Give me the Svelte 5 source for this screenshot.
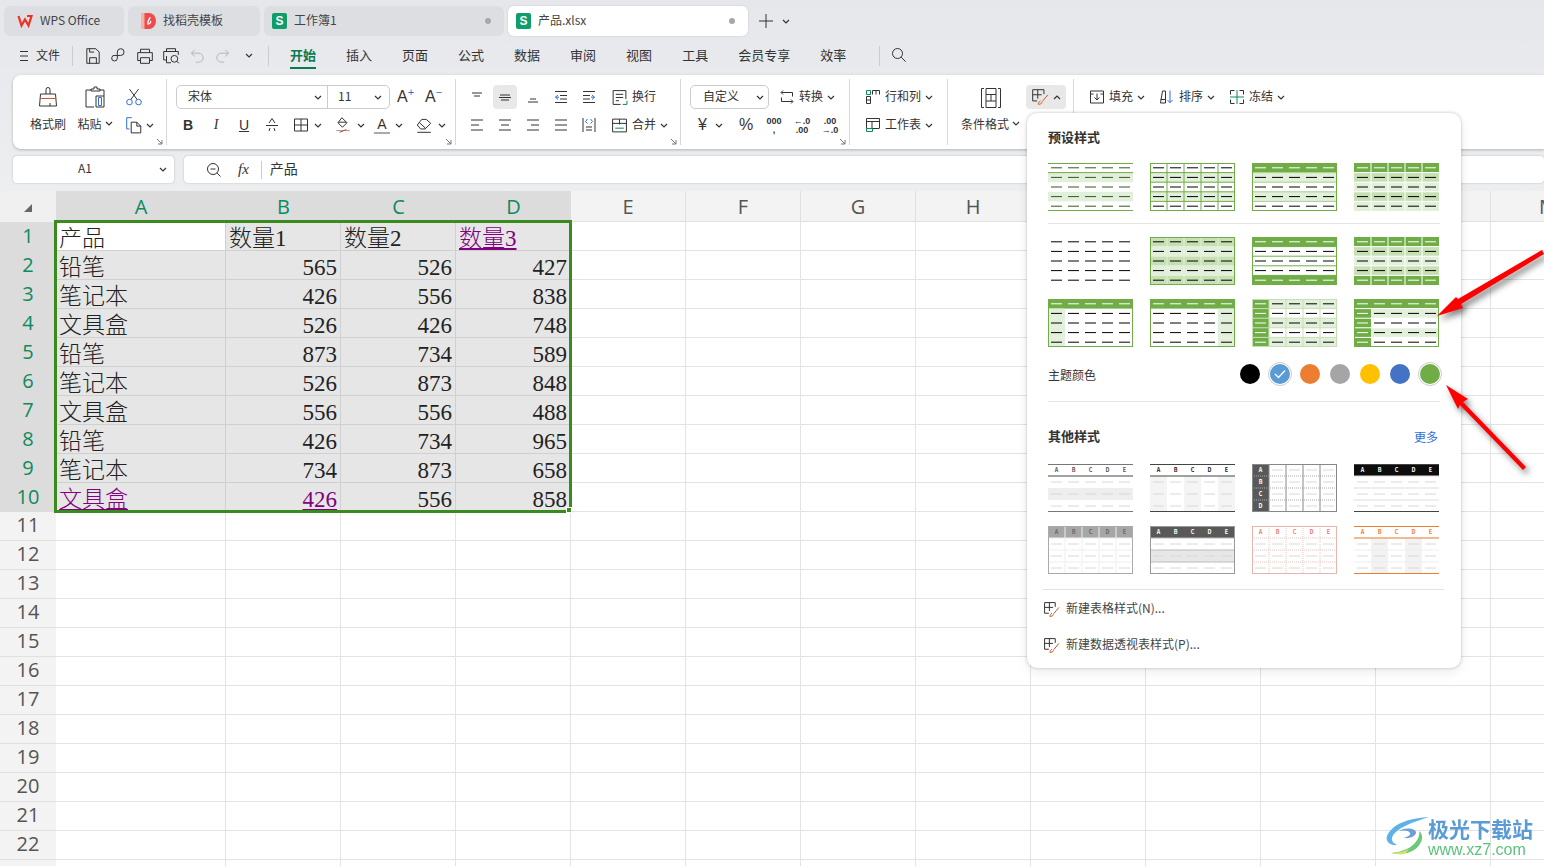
<script>
	const G = '#70ad47', L = '#e2efda', M = '#c6e0b4', W = '#fff';

	const presets = [
		{ tb: G, hdr: G, dash: '#375623', fill: (r) => (r % 2 ? L : null) },
		{ border: G, hl: G, vl: G, fill: (r) => (r % 2 ? L : null) },
		{ border: G, hl: '#a9d18e', fill: (r) => (r === 0 ? G : r % 2 ? L : null) },
		{ hl: W, vl: W, fill: (r) => (r === 0 ? G : r % 2 ? M : L) },
		{ fill: () => null },
		{ border: G, hl: L, vl: L, fill: (r) => (r % 2 ? L : M) },
		{ border: G, hl: G, fill: (r) => (r === 0 || r === 4 ? G : null) },
		{ hl: W, vl: W, fill: (r) => (r === 0 || r === 4 ? G : r % 2 ? M : L) },
		{ border: G, fill: (r, c) => (r === 0 ? G : c === 0 ? L : null) },
		{ border: G, fill: (r, c) => (r === 0 ? G : c === 4 ? L : null) },
		{ border: M, hl: M, vl: M, fill: (r, c) => (c === 0 ? G : r % 2 === 0 ? L : null) },
		{ border: G, hl: W, fill: (r, c) => (r === 0 || c === 0 ? G : r % 2 ? L : null) }
	];

	const others = [
		{ labels: 'top', lc: '#555', tb: '#777', hdr: '#444', fill: (r) => (r === 2 ? '#eee' : null) },
		{ labels: 'top', lc: '#222', tb: '#444', hdr: '#444', fill: (r, c) => (c % 2 === 0 && r > 0 ? '#f4f4f4' : null) },
		{ labels: 'left', lc: W, border: '#888', hl: '#aaa', vl: '#888', dotted: true, fill: (r, c) => (c === 0 ? '#595959' : null) },
		{ labels: 'top', lc: W, hl: '#ddd', tb: '#444', fill: (r) => (r === 0 ? '#0d0d0d' : null) },
		{ labels: 'top', lc: '#666', border: '#aaa', hl: '#eee', vl: '#eee', fill: (r) => (r === 0 ? '#a6a6a6' : null) },
		{ labels: 'top', lc: W, border: '#999', hl: '#bbb', fill: (r) => (r === 0 ? '#595959' : r === 2 ? '#e7e7e7' : null) },
		{ labels: 'top', lc: '#e77', border: '#e8b4ae', hl: '#efc4bf', vl: '#efc4bf', dotted: true, fill: () => null },
		{ labels: 'top', lc: '#ed7d31', tb: '#ed7d31', hdr: '#ed7d31', hl: '#eee', fill: (r, c) => (c % 2 === 1 && r > 0 ? '#f2f2f2' : null) }
	];

	// one thumbnail as cell list, 85x48 box
	function cells(t, rows) {
		const list = [];
		const cw = 85 / 5, ch = 48 / rows;
		for (let r = 0; r < rows; r++) {
			for (let c = 0; c < 5; c++) {
				const fill = t.fill(r, c);
				let label = null;
				if (t.labels === 'top' && r === 0) label = 'ABCDE'[c];
				if (t.labels === 'left' && c === 0) label = 'ABCD'[r];
				let stroke = t.dash || '#000';
				if (fill === G) stroke = W;
				if (rows === 4) stroke = '#d8d8d8';
				list.push({ x: c * cw, y: r * ch, w: cw, h: ch, fill, label, stroke });
			}
		}
		return list;
	}

	const swatches = [
		{ color: '#000' },
		{ color: '#5b9bd5', checked: true },
		{ color: '#ed7d31' },
		{ color: '#a5a5a5' },
		{ color: '#ffc000' },
		{ color: '#4472c4' },
		{ color: '#70ad47', ring: true }
	];

	const K = '#333', B = '#2f6fe0', N = '#0e8a5f', R = '#d2571f';
	const icons = {
		save: [['M2.5 1.5h8l3 3v10h-11z M5 14.5V9.5h6v5 M5 1.5v3h4', K]],
		share: [['M6.5 7V4.5a3 3 0 1 1 3 3H4.5a2.5 2.5 0 1 0 2 2.5V7.5', K]],
		print: [['M4 5V2h8v3 M4 12H1.5V5h13v7H12 M4 9.5h8v5H4z', K]],
		preview: [['M4 4V1.5h8V4 M3.5 11.5h-2V4h13v3 M4 8v6h4', K], ['M11 7.5a3 3 0 1 0 0 6 3 3 0 0 0 0-6z M13 12.5l2 2', K]],
		undo: [['M6 2.5 3 5.5l3 3 M3 5.5h6.5a4 4 0 0 1 0 8H7', '#b5b5b5']],
		redo: [['M10 2.5l3 3-3 3 M13 5.5H6.5a4 4 0 0 0 0 8H9', '#b5b5b5']],
		search: [['M6.5 1.5a5 5 0 1 0 0 10 5 5 0 0 0 0-10z M10.2 10.2l4.5 4.5', K]],
		plus: [['M8 1v14M1 8h14', K]],
		zoom: [['M7 1.5a5.5 5.5 0 1 0 0 11 5.5 5.5 0 0 0 0-11z M4.5 7h5 M11 11l3.5 3.5', K]],
		cut: [['M4 1l7 9.5M12 1l-7 9.5', K], ['M4 10a2.5 2.5 0 1 0 0 5 2.5 2.5 0 0 0 0-5z M12 10a2.5 2.5 0 1 0 0 5 2.5 2.5 0 0 0 0-5z', B]],
		copy: [['M6 1.5H1.5v10H4', B], ['M5.5 5.5h5l3.5 3.5v6H5.5z M10.5 5.5V9H14', K]],
		strike: [['M5 6 8 1.5 11 6 M5 14l1-3 M11 14l-1-3 M2 8.5h12', K]],
		border: [['M1.5 2h13v12h-13z M8 2v12 M1.5 8h13', K]],
		fillc: [['M7 1.5l4.5 4.5-4 4-4-4z M4 5.5h7', K], ['M2 13h12', '#999'], ['M5 14.5l6-2.5', '#e03b3b']],
		eraser: [['M6 3 2 8l3 3.5h4l5-5L10 3z M4 6l5.5 5', K], ['M2 14.5h12', K]],
		at: [['M3 4h10 M5 7h6', K]],
		am: [['M3 6h10 M2 8.500h12 M4 11h8', K]],
		ab: [['M5 10h6 M3 13h10', K]],
		indl: [['M2 2.500h12 M7 6.500h7 M7 10h7 M2 13.500h12', K], ['M5 6 2.500 8.200 5 10.500 M2.500 8.200h3.500', B]],
		indr: [['M2 2.500h12 M2 6.500h7 M2 10h7 M2 13.500h12', K], ['M11 6l2.500 2.200L11 10.500 M13.500 8.200H10', B]],
		wrap: [['M2 1.500h12v8 M2 1.500v13h7 M4.500 5h7 M4.500 8h7 M4.500 11h3', K], ['M15 11v3.500h-4', N]],
		ll: [['M2 3h12 M2 8h8 M2 13h12', K]],
		lc: [['M2 3h12 M4 8h8 M2 13h12', K]],
		lr: [['M2 3h12 M6 8h8 M2 13h12', K]],
		lj: [['M2 3h12 M2 8h12 M2 13h12', K]],
		dist: [['M2 1v14 M14 1v14 M5 10h6 M5 13h6', K], ['M6.500 2 4.500 4.500l2 2 M9.500 2l2 2.500-2 2', B]],
		merge: [['M1.500 2h13v12h-13z M8 2v5 M1.500 6h13', K], ['M4 10.500h8', N]],
		conv: [['M4 1.500 2 3.500l2 2 M2.500 3.500h11v4 M12 14.500l2-2-2-2 M13.500 12.500h-11v-4', K]],
		rows: [['M1.500 1.500h4v4h-4z', N], ['M7.500 1.500h7 M7.500 5.500v-4 M11 1.500v4 M14.500 1.500v4 M1.500 7.500h4v7h-4z M1.500 11h4', K]],
		sheet: [['M1.500 1.500h13v10 M1.500 1.500v10 M1.500 4.500h13 M7 4.500v7h7', K], ['M1.500 11.500h6v3h-6z', N]],
		tstyle: [['M1.500 1.500h10v4 M1.500 1.500v10h4 M1.500 6h8 M6 1.500v8', K], ['M15 6l-5 6 M8.500 11.500c-1.500.5-2 2-2 3 1.500 0 3-.5 3.500-2', R]],
		fillico: [['M1.500 2h13v12h-13z M1.500 5h3 M11.500 5h3', K], ['M8 4.500v6 M5.500 8.500 8 11l2.500-2.500', K]],
		sort: [['M1.500 14 3.500 2h3v12z M1.500 10.500h5', K], ['M11 1.500v12 M8.500 11l2.500 2.700 2.500-2.700', B]],
		freeze: [['M5.500 1.500h-4v4 M10.500 1.500h4v4 M5.500 14.500h-4v-4 M10.500 14.500h4v-4', K], ['M1 8h14 M8 1v14', N]]
	};

	const rowData = [
		['产品', '数量1', '数量2', '数量3'],
		['铅笔', 565, 526, 427],
		['笔记本', 426, 556, 838],
		['文具盒', 526, 426, 748],
		['铅笔', 873, 734, 589],
		['笔记本', 526, 873, 848],
		['文具盒', 556, 556, 488],
		['铅笔', 426, 734, 965],
		['笔记本', 734, 873, 658],
		['文具盒', 426, 556, 858]
	];
	const letters = 'ABCDEFGHIJKLM'.split('');
	const linked = ['0-3', '9-0', '9-1'];
	const allRows = Array.from({ length: 23 }, (_, i) => i);
	const menus = ['插入', '页面', '公式', '数据', '审阅', '视图', '工具', '会员专享', '效率'];
</script>

{#snippet icon(name, size = 16)}
	<svg class="icon" width={size} height={size} viewBox="0 0 16 16" fill="none">
		{#each icons[name] as p}
			<path d={p[0]} stroke={p[1]} stroke-width={16 / size} />
		{/each}
	</svg>
{/snippet}

{#snippet caret()}
	<svg class="caret" width="8" height="5" viewBox="0 0 8 5" fill="none"><path d="M1 1l3 3 3-3" stroke="#333" stroke-width="1.2" /></svg>
{/snippet}

{#snippet launcher()}
	<svg class="launcher" width="7" height="7" viewBox="0 0 7 7" fill="none"><path d="M1 1l5 5M6 2v4H2" stroke="#777" /></svg>
{/snippet}

{#snippet thumb(t, rows)}
	<svg class="thumb" width="85" height="48" viewBox="0 0 85 48" fill="none">
		{#each cells(t, rows) as c}
			{#if c.fill}
				<rect x={c.x} y={c.y} width={c.w} height={c.h} fill={c.fill} />
			{/if}
		{/each}
		{#each [1, 2, 3, 4].slice(0, rows - 1) as i}
			{#if t.hl}
				<line x1="0" x2="85" y1={(i * 48) / rows} y2={(i * 48) / rows} stroke={t.hl} stroke-dasharray={t.dotted ? '1 1' : null} />
			{/if}
		{/each}
		{#if t.hdr}
			<line x1="0" x2="85" y1={48 / rows} y2={48 / rows} stroke={t.hdr} />
		{/if}
		{#each [1, 2, 3, 4] as i}
			{#if t.vl}
				<line y1="0" y2="48" x1={i * 17} x2={i * 17} stroke={t.vl} stroke-dasharray={t.dotted && t.labels !== 'left' ? '1 1' : null} />
			{/if}
		{/each}
		{#each cells(t, rows) as c}
			{#if c.label}
				<text x={c.x + c.w / 2} y={c.y + c.h / 2 + 2} font-size="5.500" font-weight="700" text-anchor="middle" fill={t.lc}>{c.label}</text>
			{:else}
				<line x1={c.x + 3} x2={c.x + 14} y1={c.y + c.h / 2} y2={c.y + c.h / 2} stroke={c.stroke} />
			{/if}
		{/each}
		{#if t.tb}
			<path d="M0 .5h85M0 47.500h85" stroke={t.tb} />
		{/if}
		{#if t.border}
			<rect x=".5" y=".5" width="84" height="47" stroke={t.border} />
		{/if}
	</svg>
{/snippet}

<div class="page">
	<div class="tabs">
		<div class="tab tab-wps">
			<svg width="16" height="14" viewBox="0 0 16 14" fill="none"><path d="M1.500 2l3 9.500L8 5.500l3.500 6 3-9.500H10" stroke="#ee3124" stroke-width="2.200" /></svg>
			<span class="tab-text">WPS Office</span>
		</div>
		<div class="tab tab-tpl">
			<svg width="15" height="16" viewBox="0 0 15 16"><path d="M3 0h5a7 8 0 0 1 0 16H3z" fill="#ef4b4b" /><rect width="3.500" height="16" fill="#f9b0a8" /><path d="M9 4c0 3-3 3-2 7 2 0 3-2 2.500-3" stroke="#fff" fill="none" stroke-width="1.300" /></svg>
			<span class="tab-text">找稻壳模板</span>
		</div>
		<div class="tab tab-book">
			<span class="s-logo">S</span>
			<span class="tab-text">工作簿1</span>
			<i class="dot"></i>
		</div>
		<div class="tab tab-file active">
			<span class="s-logo">S</span>
			<span class="tab-text">产品.xlsx</span>
			<i class="dot"></i>
		</div>
		<div class="tab-add">
			{@render icon('plus', 16)}
			{@render caret()}
		</div>
	</div>

	<div class="menubar">
		<svg class="burger" width="10" height="12" viewBox="0 0 10 12" fill="none"><path d="M1 1.500h8M1 6h8M1 10.500h8" stroke="#333" /></svg>
		<span class="m-file">文件</span>
		<i class="vbar"></i>
		<div class="quick">
			{@render icon('save', 18)}
			{@render icon('share', 18)}
			{@render icon('print', 18)}
			{@render icon('preview', 18)}
			{@render icon('undo', 18)}
			{@render icon('redo', 18)}
			{@render caret()}
		</div>
		<i class="vbar second"></i>
		<span class="menu current">开始</span>
		{#each menus as m}
			<span class="menu">{m}</span>
		{/each}
		<i class="vbar third"></i>
		<span class="m-search">{@render icon('search')}</span>
	</div>

	<div class="ribbon">
		<div class="group g1">
			<div class="big w-brush">
				<svg width="24" height="24" viewBox="0 0 24 24" fill="none"><path d="M10 9V4.500a2 2 0 0 1 4 0V9 M4.500 9h15l1 12H3.500z M14 21v-3" stroke="#333" /><path d="M5 13.500h14" stroke={R} /></svg>
				<span>格式刷</span>
			</div>
			<div class="big w-paste">
				<svg width="24" height="24" viewBox="0 0 24 24" fill="none"><path d="M8 4h3V2h3v2h3v2H8z M17 5h4v6 M8 5H3v17h8 M13 11v11h8V11z" stroke="#333" /><path d="M15.500 12.500h3v8h-3z" stroke={B} /></svg>
				<span class="lbl">粘贴{@render caret()}</span>
			</div>
			<div class="stack">
				<div class="tool-row">{@render icon('cut', 18)}</div>
				<div class="tool-row">{@render icon('copy', 18)}{@render caret()}</div>
			</div>
			{@render launcher()}
		</div>

		<div class="group g2">
			<div class="row">
				<div class="combo font-combo">
					<span class="font-name">宋体</span>{@render caret()}
					<i class="combo-line"></i>
					<span class="font-size">11</span>{@render caret()}
				</div>
				<span class="grow-btn">A<sup class="blue">+</sup></span>
				<span class="grow-btn">A<sup class="blue">−</sup></span>
			</div>
			<div class="row">
				<span class="ib serifb">B</span>
				<span class="ib serifi">I</span>
				<span class="ib serifu">U</span>
				<span class="ib">{@render icon('strike')}</span>
				<span class="ic-drop first">{@render icon('border')}{@render caret()}</span>
				<span class="ic-drop">{@render icon('fillc', 18)}{@render caret()}</span>
				<span class="ic-drop"><span class="color-a">A</span>{@render caret()}</span>
				<span class="ic-drop">{@render icon('eraser', 18)}{@render caret()}</span>
			</div>
			{@render launcher()}
		</div>

		<div class="group g3">
			<div class="row">
				<span class="ib">{@render icon('at')}</span>
				<span class="ib on">{@render icon('am')}</span>
				<span class="ib">{@render icon('ab')}</span>
				<span class="ib">{@render icon('indl')}</span>
				<span class="ib">{@render icon('indr')}</span>
				<span class="text-tool tight">{@render icon('wrap', 17)}<span>换行</span></span>
			</div>
			<div class="row">
				<span class="ib">{@render icon('ll')}</span>
				<span class="ib">{@render icon('lc')}</span>
				<span class="ib">{@render icon('lr')}</span>
				<span class="ib">{@render icon('lj')}</span>
				<span class="ib">{@render icon('dist')}</span>
				<span class="text-tool tight">{@render icon('merge', 17)}<span>合并</span>{@render caret()}</span>
			</div>
			{@render launcher()}
		</div>

		<div class="group g4">
			<div class="row">
				<div class="combo num-combo"><span>自定义</span>{@render caret()}</div>
				<span class="text-tool conv">{@render icon('conv')}<span>转换</span>{@render caret()}</span>
			</div>
			<div class="row">
				<span class="ic-drop yen"><span class="sym">¥</span>{@render caret()}</span>
				<span class="ib sym">%</span>
				<span class="ib small-sym">000<br />,</span>
				<span class="ib small-sym">←.0<br />.00</span>
				<span class="ib small-sym">.00<br />→.0</span>
			</div>
			{@render launcher()}
		</div>

		<div class="group g5">
			<div class="row"><span class="text-tool">{@render icon('rows')}<span>行和列</span>{@render caret()}</span></div>
			<div class="row"><span class="text-tool">{@render icon('sheet')}<span>工作表</span>{@render caret()}</span></div>
		</div>

		<div class="group g6">
			<div class="big w-cond">
				<svg width="22" height="22" viewBox="0 0 22 22" fill="none"><path d="M4 1.500H1.500v19H4 M18 1.500h2.500v19H18 M6 1.500h10v19H6z M6 7.500h10 M6 14h10 M11 7.500V14" stroke="#333" /></svg>
				<span class="lbl">条件格式{@render caret()}</span>
			</div>
			<div class="tstyle-btn">{@render icon('tstyle', 18)}<svg width="8" height="5" viewBox="0 0 8 5" fill="none"><path d="M1 4l3-3 3 3" stroke="#333" stroke-width="1.200" /></svg></div>
		</div>

		<div class="group g7">
			<div class="row">
				<span class="text-tool">{@render icon('fillico')}<span>填充</span>{@render caret()}</span>
				<span class="text-tool">{@render icon('sort')}<span>排序</span>{@render caret()}</span>
				<span class="text-tool">{@render icon('freeze')}<span>冻结</span>{@render caret()}</span>
			</div>
		</div>
	</div>

	<div class="formula">
		<div class="namebox"><span class="up">A1</span>{@render caret()}</div>
		<div class="fbar">
			<span class="f-zoom">{@render icon('zoom')}</span>
			<span class="fx">fx</span>
			<i class="f-line"></i>
			<span class="f-value up">产品</span>
		</div>
	</div>

	<div class="sheet">
		<div class="corner"><svg width="10" height="10" viewBox="0 0 10 10"><path d="M9 1v8H1z" fill="#666" /></svg></div>
		{#each letters as l, i}
			<div class="colhead" class:sel={i < 4}>{l}</div>
		{/each}
		{#each allRows as r}
			<div class="rowhead" class:sel={r < 10}>{r + 1}</div>
			{#each letters as l, c}
				{#if r < 10 && c < 4}
					<div class="cell sel" class:blank={r === 0 && c === 0} class:num={r > 0 && c > 0}>
						<span class:link={linked.includes(`${r}-${c}`)}>{rowData[r][c]}</span>
					</div>
				{:else}
					<div class="cell"></div>
				{/if}
			{/each}
		{/each}
		<div class="selection"><i class="handle"></i></div>
	</div>

	<div class="dropdown">
		<div class="dd-title"><span>预设样式</span></div>
		<div class="thumbs">
			{#each presets.slice(0, 4) as t}{@render thumb(t, 5)}{/each}
		</div>
		<div class="dd-line first"></div>
		<div class="thumbs tight-rows">
			{#each presets.slice(4) as t}{@render thumb(t, 5)}{/each}
		</div>
		<div class="theme">
			<span>主题颜色</span>
			<div class="swatches">
				{#each swatches as s}
					<span class="swatch" class:ringed={s.checked || s.ring} style:background={s.color}>
						{#if s.checked}
							<svg width="12" height="10" viewBox="0 0 12 10" fill="none"><path d="M1 5l3.500 3.500L11 1.500" stroke="#fff" stroke-width="1.300" /></svg>
						{/if}
					</span>
				{/each}
			</div>
		</div>
		<div class="dd-line second"></div>
		<div class="dd-title other"><span>其他样式</span><a href="#more">更多</a></div>
		<div class="thumbs tight-rows">
			{#each others as t}{@render thumb(t, 4)}{/each}
		</div>
		<div class="dd-line wide"></div>
		<div class="dd-item">{@render icon('tstyle', 17)}<span class="up">新建表格样式(N)...</span></div>
		<div class="dd-item">{@render icon('tstyle', 17)}<span class="up">新建数据透视表样式(P)...</span></div>
	</div>

	<svg class="arrows" width="1544" height="866" viewBox="0 0 1544 866">
		<path d="M1542 250 1458 299 1456 297 1437 316 1463 308 1461 304 1544 254z" fill="#f00" />
		<path d="M1446 385 1468 399 1463 402 1526 467 1523 470 1460 405 1458 409z" fill="#f00" />
	</svg>

	<div class="watermark">
		<svg width="46" height="40" viewBox="0 0 46 40" fill="none">
			<path d="M44 1C28 2 8 6 2 20c-2 6 4 10 10 9-5-2-7-6-3-11C15 10 32 5 44 1z" fill="#5fb2e8" />
			<path d="M14 15c6-4 16-3 17 1 1 3-5 7-12 6 3-1 7-3 6-5-1-3-7-3-11-2z" fill="#6a9fd8" />
			<path d="M34 15c6 4 3 14-5 19-6 4-16 5-23 3 10-1 18-4 23-9 4-4 6-9 5-13z" fill="#6cc97a" />
			<path d="M6 37c8 0 14-2 18-4l-4 5c-5 1-10 0-14-1z" fill="#d9e36a" />
		</svg>
		<div class="wm-text">
			<span class="wm-cn">极光下载站</span>
			<span class="wm-en">www.xz7.com</span>
		</div>
	</div>
</div>

<style>
	:global(body) {
		margin: 0;
		font-family: 'Noto Sans CJK SC', 'Noto Sans', sans-serif;
		color: #333;
	}

	.page {
		position: relative;
		width: 1544px;
		height: 866px;
		overflow: hidden;
		background: linear-gradient(#e5e7eb, #eceef0 190px);
		font-size: 12px;
	}

	.icon,
	.caret {
		display: block;
		flex: none;
	}

	.up { padding-bottom: 4px; }

	/* tab strip */
	.tabs {
		display: flex;
		gap: 4px;
		padding: 6px 0 0 4px;
		height: 30px;
	}

	.tab {
		display: flex;
		align-items: center;
		gap: 7px;
		height: 30px;
		box-sizing: border-box;
		padding: 0 13px;
		background: #dcdee2;
		border-radius: 6px;
		color: #444;
	}

	.tab-text { padding-bottom: 4px; }

	.tab-wps { width: 120px; }
	.tab-tpl { width: 132px; }
	.tab-book { width: 240px; padding-left: 8px; }
	.tab-file { width: 240px; padding-left: 8px; }

	.tab.active {
		background: #fff;
		box-shadow: 0 0 2px rgba(0, 0, 0, 0.15);
	}

	.s-logo {
		width: 15px;
		height: 16px;
		background: #0f9d6b;
		border-radius: 2px;
		color: #fff;
		font: 700 12px/16px 'Liberation Sans', sans-serif;
		text-align: center;
	}

	.dot {
		width: 6px;
		height: 6px;
		margin-left: auto;
		border-radius: 50%;
		background: #a8a8a8;
	}

	.tab-add {
		display: flex;
		align-items: center;
		gap: 8px;
		margin-left: 6px;
	}

	/* menu row */
	.menubar {
		display: flex;
		align-items: center;
		height: 39px;
		padding-left: 19px;
		font-size: 13px;
	}

	.menubar span { padding-bottom: 2px; }

	.m-file {
		margin-left: 7px;
		font-size: 12px;
	}

	.vbar {
		width: 1px;
		height: 20px;
		margin-left: 12px;
		background: #ccc;
	}

	.quick {
		display: flex;
		align-items: center;
		gap: 8px;
		margin-left: 11px;
	}

	.quick .caret { margin-left: 5px; }

	.vbar.second { margin-left: 15px; }
	.vbar.third { margin-left: 33px; }

	.menu {
		position: relative;
		margin-left: 30px;
		white-space: nowrap;
	}

	.menu.current {
		margin-left: 21px;
		color: #0a7a50;
		font-weight: 700;
	}

	.menu.current::after {
		content: '';
		position: absolute;
		left: 0;
		right: 0;
		bottom: -3px;
		height: 2px;
		background: #0a7a50;
	}

	.m-search { margin-left: 11px; }

	/* ribbon */
	.ribbon {
		position: relative;
		display: flex;
		height: 74px;
		box-sizing: border-box;
		margin-left: 13px;
		padding-top: 4px;
		background: #fff;
		border-radius: 8px 0 0 8px;
		box-shadow: 0 1px 3px rgba(0, 0, 0, 0.25);
		z-index: 1;
	}

	.group {
		position: relative;
		box-sizing: border-box;
		height: 66px;
		padding-top: 6px;
		border-right: 1px solid #d8d8d8;
	}

	.g1 { display: flex; width: 154px; padding-left: 13px; }
	.g2 { width: 289px; padding-left: 7px; }
	.g3 { width: 225px; padding-left: 7px; }
	.g4 { width: 169px; padding-left: 9px; }
	.g5 { width: 98px; padding-left: 15px; }
	.g6 { display: flex; width: 126px; padding-left: 13px; }
	.g7 { border-right: 0; padding-left: 15px; }

	.row {
		display: flex;
		align-items: center;
		height: 24px;
		margin-bottom: 4px;
	}

	.launcher {
		position: absolute;
		right: 3px;
		bottom: 0;
	}

	.big {
		display: flex;
		flex-direction: column;
		align-items: center;
		gap: 2px;
	}

	.big span {
		display: flex;
		align-items: center;
		gap: 3px;
		height: 24px;
		white-space: nowrap;
	}

	.w-brush { width: 44px; }
	.w-paste { width: 50px; }
	.w-cond { width: 59px; padding-top: 2px; }

	.stack {
		display: flex;
		flex-direction: column;
		gap: 4px;
		padding-left: 3px;
	}

	.tool-row {
		display: flex;
		align-items: center;
		gap: 3px;
		height: 24px;
		padding-left: 2px;
	}

	.combo {
		display: flex;
		align-items: center;
		box-sizing: border-box;
		height: 24px;
		border: 1px solid #ccc;
		border-radius: 5px;
	}

	.combo span { padding-bottom: 3px; }

	.font-combo {
		width: 214px;
		margin-left: 2px;
	}

	.font-name { width: 126px; padding-left: 11px; }

	.combo-line {
		width: 1px;
		height: 22px;
		margin: 0 10px 0 5px;
		background: #ccc;
	}

	.font-size { width: 36px; }

	.grow-btn {
		width: 22px;
		margin-left: 7px;
		font: 16px 'Liberation Sans', sans-serif;
		white-space: nowrap;
	}

	.grow-btn + .grow-btn { margin-left: 6px; }

	.blue {
		color: #2f6fe0;
		font-size: 11px;
		line-height: 0;
	}

	.ib {
		display: flex;
		align-items: center;
		justify-content: center;
		flex: none;
		width: 28px;
		height: 24px;
		border-radius: 4px;
	}

	.ib.on {
		width: 24px;
		margin: 0 2px;
		background: #e8e8e8;
	}

	.serifb { font: 700 14px 'Liberation Sans', sans-serif; }
	.serifi { font: italic 14px 'Liberation Serif', serif; }
	.serifu { font: 14px 'Liberation Sans', sans-serif; text-decoration: underline; }

	.ic-drop {
		display: flex;
		align-items: center;
		flex: none;
		gap: 5px;
		width: 40.500px;
	}

	.ic-drop.first { margin-left: 7px; }

	.color-a {
		width: 16px;
		font: 14px 'Liberation Sans', sans-serif;
		text-align: center;
		border-bottom: 2px solid #aaa;
		line-height: 15px;
	}

	.text-tool {
		display: flex;
		align-items: center;
		gap: 4px;
		white-space: nowrap;
		margin-right: 14px;
	}

	.text-tool span { padding-bottom: 4px; }

	.text-tool.tight { margin-left: 8px; margin-right: 0; }

	.num-combo {
		justify-content: space-between;
		width: 80px;
		padding: 0 4px 0 12px;
	}

	.conv { margin-left: 10px; }

	.yen { width: 34px; margin-left: 8px; gap: 8px; }
	.sym { font-size: 16px; font-family: 'Liberation Sans', sans-serif; }

	.small-sym {
		display: block;
		height: 20px;
		padding-top: 4px;
		font: 700 9px/9px 'Liberation Sans', sans-serif;
		text-align: center;
	}

	.tstyle-btn {
		display: flex;
		align-items: center;
		gap: 4px;
		box-sizing: border-box;
		width: 40px;
		height: 24px;
		margin-left: 6px;
		padding-left: 5px;
		background: #e8e8e8;
		border-radius: 4px;
	}

	/* formula row */
	.formula {
		display: flex;
		gap: 10px;
		height: 27px;
		margin: 7px 0 8px 13px;
	}

	.namebox {
		display: flex;
		align-items: center;
		justify-content: space-between;
		box-sizing: border-box;
		width: 161px;
		padding: 0 7px 0 65px;
		background: #fff;
		border-radius: 4px;
		box-shadow: 0 0 2px rgba(0, 0, 0, 0.25);
	}

	.fbar {
		display: flex;
		align-items: center;
		flex: 1;
		background: #fff;
		border-radius: 4px;
		box-shadow: 0 0 2px rgba(0, 0, 0, 0.25);
	}

	.f-zoom { margin-left: 22px; }

	.fx {
		margin-left: 16px;
		font: italic 15px 'Liberation Serif', serif;
	}

	.f-line {
		width: 1px;
		height: 18px;
		margin-left: 12px;
		background: #ccc;
	}

	.f-value {
		margin-left: 8px;
		font-size: 14px;
	}

	/* sheet */
	.sheet {
		position: relative;
		display: grid;
		grid-template-columns: 56px 170px repeat(12, 115px);
		grid-template-rows: 31px repeat(23, 29px);
		background: #fff;
		height: 675px;
		overflow: hidden;
	}

	.corner {
		display: flex;
		align-items: center;
		justify-content: center;
		background: #f0f0f0;
		padding-top: 3px;
	}

	.colhead {
		display: flex;
		align-items: center;
		justify-content: center;
		box-sizing: border-box;
		background: #f3f3f3;
		border-right: 1px solid #e0e0e0;
		border-bottom: 1px solid #e0e0e0;
		color: #555;
		font: 20px 'Open Sans', sans-serif;
	}

	.colhead.sel {
		background: #dcdcdc;
		color: #0e8a5f;
		border-right: 0;
	}

	.rowhead {
		display: flex;
		align-items: center;
		justify-content: center;
		box-sizing: border-box;
		padding-bottom: 3px;
		background: #f3f3f3;
		border-bottom: 1px solid #e0e0e0;
		color: #555;
		font: 20px 'Open Sans', sans-serif;
	}

	.rowhead.sel {
		background: #dcdcdc;
		color: #0e8a5f;
		border-bottom: 0;
	}

	.cell {
		display: flex;
		align-items: flex-end;
		box-sizing: border-box;
		border-right: 1px solid #e3e3e3;
		border-bottom: 1px solid #e3e3e3;
		padding: 0 3px;
		font: 300 23px/22px 'Liberation Serif', 'Noto Sans CJK SC', serif;
		color: #222;
	}

	.cell.sel {
		background: #e6e6e6;
		border-color: #d0d0d0;
	}

	.cell.blank { background: #fff; }
	.cell.num { justify-content: flex-end; }

	.link {
		color: #800080;
		text-decoration: underline;
	}

	.selection {
		position: absolute;
		grid-column: 2 / 6;
		grid-row: 2 / 12;
		inset: -2px -1px -1px -2px;
		border: 3px solid #3b8a1f;
	}

	.handle {
		position: absolute;
		right: -3px;
		bottom: -3px;
		width: 4px;
		height: 4px;
		background: #3b8a1f;
		border: 1px solid #fff;
	}

	/* table style menu */
	.dropdown {
		position: absolute;
		left: 1027px;
		top: 113px;
		box-sizing: border-box;
		width: 434px;
		height: 555px;
		padding: 16px 21px 0;
		background: #fff;
		border-radius: 10px;
		box-shadow: 0 0 3px rgba(0, 0, 0, 0.25), 0 4px 12px rgba(0, 0, 0, 0.08);
		z-index: 5;
	}

	.dd-title {
		display: flex;
		justify-content: space-between;
		align-items: center;
		height: 18px;
		margin-bottom: 16px;
		font-size: 13px;
		font-weight: 700;
	}

	.dd-title span { padding-bottom: 4px; }

	.dd-title a {
		margin-right: 2px;
		padding-bottom: 2px;
		color: #2f6fe0;
		font-size: 12px;
		font-weight: 400;
		text-decoration: none;
	}

	.dd-title.other { margin: 26px 0 18px; }

	.thumbs {
		display: grid;
		grid-template-columns: repeat(4, 85px);
		column-gap: 17px;
	}

	.thumbs.tight-rows { row-gap: 14px; }

	.thumb { display: block; }

	.dd-line {
		height: 1px;
		background: #e3e3e3;
	}

	.dd-line.first { margin: 12px 0 13px; }
	.dd-line.second { margin-top: 17px; }
	.dd-line.wide { margin: 15px -4px 0 -5px; }

	.theme {
		display: flex;
		align-items: center;
		justify-content: space-between;
		height: 20px;
		margin-top: 17px;
	}

	.swatches {
		display: flex;
		gap: 10px;
	}

	.swatch {
		display: flex;
		align-items: center;
		justify-content: center;
		width: 20px;
		height: 20px;
		border-radius: 50%;
	}

	.swatch.ringed {
		outline: 1px solid #ccc;
		outline-offset: 1px;
	}

	.dd-item {
		display: flex;
		align-items: center;
		gap: 6px;
		height: 36px;
		margin-left: -5px;
		color: #444;
	}

	.dd-line.wide + .dd-item { margin-top: 1px; }

	/* overlays */
	.arrows {
		position: absolute;
		left: 0;
		top: 0;
		z-index: 6;
		pointer-events: none;
		filter: drop-shadow(3px 4px 3px rgba(0, 0, 0, 0.5));
	}

	.watermark {
		position: absolute;
		left: 1385px;
		top: 816px;
		display: flex;
		z-index: 6;
		filter: blur(0.4px);
	}

	.wm-text {
		display: flex;
		flex-direction: column;
		margin-left: -3px;
	}

	.wm-cn {
		color: #5b9bd5;
		font-size: 21px;
		font-weight: 700;
		line-height: 24px;
		white-space: nowrap;
	}

	.wm-en {
		color: #5cc27e;
		font: 16px/20px 'Liberation Sans', sans-serif;
	}
</style>
